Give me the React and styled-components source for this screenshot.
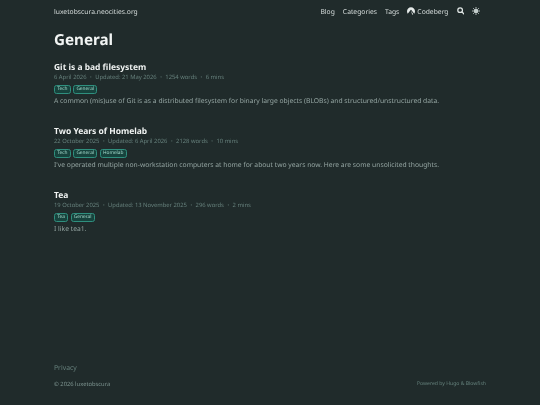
import React from 'react'
import styled, { createGlobalStyle } from 'styled-components'

const posts = [
  {
    title: 'Git is a bad filesystem',
    meta: ['6 April 2026', 'Updated: 21 May 2026', '1254 words', '6 mins'],
    tags: ['Tech', 'General'],
    summary:
      'A common (mis)use of Git is as a distributed filesystem for binary large objects (BLOBs) and structured/unstructured data.',
  },
  {
    title: 'Two Years of Homelab',
    meta: ['22 October 2025', 'Updated: 6 April 2026', '2128 words', '10 mins'],
    tags: ['Tech', 'General', 'Homelab'],
    summary:
      "I've operated multiple non-workstation computers at home for about two years now. Here are some unsolicited thoughts.",
  },
  {
    title: 'Tea',
    meta: ['19 October 2025', 'Updated: 13 November 2025', '296 words', '2 mins'],
    tags: ['Tea', 'General'],
    summary: 'I like tea1.',
  },
]

export default function App() {
  return (
    <Page>
      <GlobalStyle />
      <Header>
        <SiteName>luxetobscura.neocities.org</SiteName>
        <Nav>
          <NavLink>Blog</NavLink>
          <NavLink>Categories</NavLink>
          <NavLink>Tags</NavLink>
          <CodebergLink>
            <CodebergIcon />
            Codeberg
          </CodebergLink>
          <SearchIcon />
          <SunIcon />
        </Nav>
      </Header>
      <Main>
        <Heading>General</Heading>
        {posts.map((post) => (
          <Post key={post.title} {...post} />
        ))}
      </Main>
      <Footer>
        <FooterLink>Privacy</FooterLink>
        <FooterRow>
          <Copyright>© 2026 luxetobscura</Copyright>
          <Powered>Powered by Hugo &amp; Blowfish</Powered>
        </FooterRow>
      </Footer>
    </Page>
  )
}

function Post({ title, meta, tags, summary }) {
  return (
    <Article>
      <PostTitle>{title}</PostTitle>
      <Meta>
        {meta.map((item, index) => (
          <React.Fragment key={item}>
            {index > 0 && <Dot>·</Dot>}
            <span>{item}</span>
          </React.Fragment>
        ))}
      </Meta>
      <Tags>
        {tags.map((tag) => (
          <Tag key={tag}>{tag}</Tag>
        ))}
      </Tags>
      <Summary>{summary}</Summary>
    </Article>
  )
}

function CodebergIcon() {
  return (
    <svg width="8" height="8" viewBox="0 0 24 24" fill="#e6ebea">
      <path d="M12 1C5.400 1 0 6.400 0 13c0 2.600.8 5 2.200 7L11.600 8.500c.2-.3.6-.3.8 0L21.800 20C23.200 18 24 15.600 24 13c0-6.600-5.400-12-12-12z" />
      <path d="M12.300 11.500l6.300 9.900c-1 .8-2.100 1.400-3.300 1.700z" />
    </svg>
  )
}

function SearchIcon() {
  return (
    <svg width="7.500" height="7.500" viewBox="0 0 24 24" fill="none" stroke="#dfe5e4" strokeWidth="4" strokeLinecap="round">
      <circle cx="10" cy="10" r="7.500" />
      <path d="M16 16l6.500 6.500" />
    </svg>
  )
}

function SunIcon() {
  return (
    <svg width="8" height="8" viewBox="0 0 24 24" fill="#c3cccb">
      <circle cx="12" cy="12" r="7" />
      <g stroke="#c3cccb" strokeWidth="3" strokeLinecap="round">
        <path d="M12 1.500v2M12 20.500v2M1.500 12h2M20.500 12h2M4.600 4.600L6 6M18 18l1.400 1.400M4.600 19.400L6 18M18 6l1.400-1.400" />
      </g>
    </svg>
  )
}

const GlobalStyle = createGlobalStyle`
  html, body {
    margin: 0;
    padding: 0;
    background: #202b2b;
  }
`

const Page = styled.div`
  box-sizing: border-box;
  width: 540px;
  height: 405px;
  padding: 0 54px;
  display: flex;
  flex-direction: column;
  background: #202b2b;
  font-family: 'Noto Sans', sans-serif;
  text-rendering: geometricPrecision;
  color: #94a3a3;
  overflow: hidden;
  filter: blur(0.25px);
`

const Header = styled.header`
  height: 22px;
  display: flex;
  align-items: center;
  justify-content: space-between;
`

const SiteName = styled.a`
  font-size: 6.750px;
  color: #d5dcdb;
`

const Nav = styled.nav`
  display: flex;
  align-items: center;
  gap: 8px;
  padding-right: 6px;
`

const NavLink = styled.a`
  font-size: 6.750px;
  color: #d5dcdb;
`

const CodebergLink = styled(NavLink)`
  display: flex;
  align-items: center;
  gap: 2px;
`

const Main = styled.main`
  flex: 1;
`

const Heading = styled.h1`
  margin: 7.500px 0 12.400px;
  font-size: 15.200px;
  line-height: 20px;
  font-weight: 700;
  color: #f1f4f3;
`

const Article = styled.article`
  margin-bottom: 19.800px;
`

const PostTitle = styled.h2`
  margin: 0;
  font-size: 8.450px;
  line-height: 11px;
  font-weight: 700;
  color: #f1f4f3;
`

const Meta = styled.div`
  display: flex;
  font-size: 5.850px;
  line-height: 9px;
  color: #66807c;
`

const Dot = styled.span`
  margin: 0 3.500px;
  font-weight: 700;
`

const Tags = styled.div`
  display: flex;
  gap: 2.500px;
  margin-top: 3.500px;
`

const Tag = styled.span`
  display: flex;
  align-items: center;
  box-sizing: border-box;
  padding: 0 2.200px;
  height: 8.700px;
  font-size: 4.800px;
  line-height: 1;
  color: #a3d9cb;
  background: #17433d;
  border: 0.600px solid #2f8f7e;
  border-radius: 2.500px;
`

const Summary = styled.p`
  margin: 2px 0 0;
  font-size: 6.750px;
  line-height: 10px;
  color: #94a5a2;
`

const Footer = styled.footer`
  padding-bottom: 16px;
`

const FooterLink = styled.a`
  display: block;
  font-size: 6.800px;
  line-height: 10px;
  color: #66807c;
`

const FooterRow = styled.div`
  display: flex;
  justify-content: space-between;
  align-items: center;
  margin-top: 6px;
  height: 10px;
`

const Copyright = styled.span`
  font-size: 5.800px;
  color: #7d9490;
`

const Powered = styled.span`
  font-size: 5.100px;
  color: #64807b;
`
